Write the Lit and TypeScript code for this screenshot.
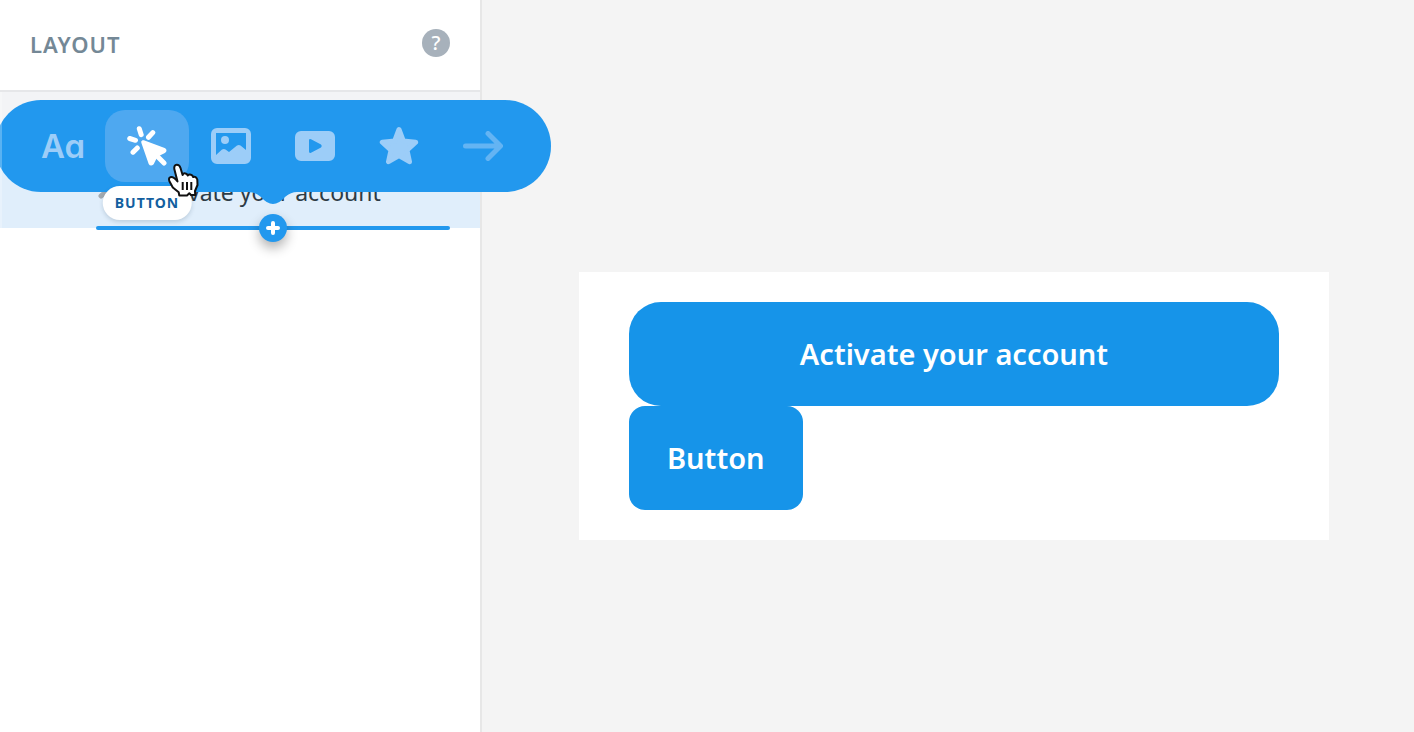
import { LitElement, html, css, svg } from "lit";
import { customElement, property, state } from "lit/decorators.js";

const icons: Record<string, unknown> = {
  button: svg`<svg viewBox="0 0 40 40" width="40" height="40" aria-hidden="true">
    <g fill="none" stroke="currentColor" stroke-width="5" stroke-linecap="round">
      <path d="M12.300 2.700l1.900 6M2.700 12.500l5.800 1.800M25.800 6.600l-4.300 4.700M10.300 21.900l-4.300 4.300M29 29l8 8"/>
    </g>
    <path d="M16.200 16.200L37 23.800Q38 24.500 37 25.200L30.500 28.500 28 31 25 37Q24 38 23.500 37Z" fill="currentColor" stroke="currentColor" stroke-width="4" stroke-linejoin="round"/>
  </svg>`,
  image: svg`<svg viewBox="0 0 40 36" width="40" height="36" aria-hidden="true">
    <path fill="currentColor" fill-rule="evenodd" d="M6 0h28a6 6 0 0 1 6 6v24a6 6 0 0 1-6 6H6a6 6 0 0 1-6-6V6a6 6 0 0 1 6-6zM5 5v22l6-5.500q2-1 3.500 0L18 24l8-6.500q2-1 3.500 0L35 22V5z"/>
    <circle cx="14" cy="12" r="4" fill="currentColor"/>
  </svg>`,
  video: svg`<svg viewBox="0 0 40 30" width="40" height="30" aria-hidden="true">
    <path fill="currentColor" fill-rule="evenodd" d="M6 0h28a6 6 0 0 1 6 6v18a6 6 0 0 1-6 6H6a6 6 0 0 1-6-6V6a6 6 0 0 1 6-6zM14 9.500v11q0 2 2 1.200l10-5.200q1.600-1.500 0-3L16 8.300Q14 7.500 14 9.500z"/>
  </svg>`,
  star: svg`<svg viewBox="0 0 40 40" width="40" height="40" aria-hidden="true">
    <path fill="currentColor" stroke="currentColor" stroke-width="5" stroke-linejoin="round" d="M20 3.500l4.300 11.500L36.700 16.200l-8.700 8 2.500 11.500L20 29.500 9.500 35.700l2.500-11.500L3.300 16.200l12.400-1.200z"/>
  </svg>`,
  arrow: svg`<svg viewBox="0 0 40 30" width="40" height="30" aria-hidden="true">
    <path fill="none" stroke="currentColor" stroke-width="5" stroke-linecap="round" stroke-linejoin="round" d="M2.500 15h34.500M25 2.500L37.500 15 25 27.500"/>
  </svg>`,
};

const blocks = ["text", "button", "image", "video", "star", "arrow"];

@customElement("block-picker")
class BlockPicker extends LitElement {
  @property() selected = "button";

  static styles = css`
    :host {
      display: block;
    }
    .bar {
      display: flex;
      position: relative;
      padding: 10px 26px;
      border-radius: 46px;
      background: #2298ee;
    }
    .tail {
      position: absolute;
      top: 100%;
      left: 50%;
      margin: -1px 0 0 -24px;
      color: #2298ee;
    }
    .item {
      position: relative;
      display: flex;
      align-items: center;
      justify-content: center;
      width: 84px;
      height: 72px;
      padding: 0;
      border: 0;
      border-radius: 20px;
      background: none;
      color: #9ccdf8;
      cursor: pointer;
    }
    .item.selected {
      background: #4ea8f0;
      color: #fff;
    }
    .item.last {
      color: #64b4f3;
    }
    .letters {
      font: 600 33px/40px Inter, sans-serif;
      font-feature-settings: "cv11";
    }
    .tip {
      position: absolute;
      top: 76px;
      left: 50%;
      transform: translateX(-50%);
      padding: 0 12px;
      border-radius: 17px;
      background: #fff;
      box-shadow: 0 2px 4px rgba(30, 60, 90, 0.18);
      color: #135f9f;
      font: 700 14px/34px "Noto Sans", sans-serif;
      letter-spacing: 1px;
    }
    .pointer {
      position: absolute;
      top: 52px;
      left: 62px;
      z-index: 1;
    }
  `;

  private pick(name: string) {
    this.selected = name;
    this.dispatchEvent(new CustomEvent("pick", { detail: name }));
  }

  render() {
    return html`<div class="bar" role="toolbar" aria-label="Blocks">
      ${blocks.map((name) => {
        const on = name === this.selected;
        return html`<button
          class="item ${on ? "selected" : ""} ${name === "arrow" ? "last" : ""}"
          aria-label=${name}
          @click=${() => this.pick(name)}
        >
          ${name === "text" ? html`<span class="letters">Aa</span>` : icons[name]}
          ${on
            ? html`<span class="tip">${name.toUpperCase()}</span>
                <svg class="pointer" width="34" height="36" viewBox="0 0 34 36" aria-hidden="true">
                  <path
                    d="M12.300 33.500L11.700 30.300 5.800 25.500 2.300 19Q1.200 15.500 4 15 7 14.800 10.500 19.500L7.300 7Q6.800 3 9.700 2.800 12.500 2.700 13.500 6L15.600 13Q16.500 10.800 18.500 11.500 20 11.800 20.800 13.500 22 12 24 12.800 25.500 13.300 26.200 15 29 13.800 30.300 17.500L30.500 23 28 29 28.200 33H24L22.300 31.300 20 33.500Z"
                    fill="#fff" stroke="#111" stroke-width="2" stroke-linejoin="round"/>
                  <path d="M15.700 20v8M20 20v8M24.300 20v8" stroke="#111" stroke-width="2"/>
                </svg>`
            : ""}
        </button>`;
      })}
      <svg class="tail" width="48" height="13" viewBox="0 0 48 13" aria-hidden="true">
        <path fill="currentColor" d="M0 0h48v1q-6 0-12 5-6 7-12 7T12 6Q6 1 0 1z"/>
      </svg>
    </div>`;
  }
}

@customElement("app-root")
class AppRoot extends LitElement {
  @state() private picked = "button";

  static styles = css`
    :host {
      display: grid;
      grid-template-columns: 480px 1fr;
      min-height: 100vh;
      overflow: hidden;
      position: relative;
      background: #f4f4f4;
      font-family: "Noto Sans", sans-serif;
    }
    .side {
      background: #fff;
      box-shadow: 2px 0 #e7e7e7;
    }
    .head {
      display: flex;
      align-items: center;
      justify-content: space-between;
      height: 90px;
      padding: 0 30px;
      border-bottom: 2px solid #e6e7e9;
    }
    .title {
      margin: 0;
      padding-bottom: 2px;
      color: #748896;
      font-size: 22px;
      line-height: 32px;
      font-weight: 600;
      letter-spacing: 1px;
    }
    .help {
      width: 28px;
      height: 28px;
      margin-bottom: 4px;
      padding: 0;
      border: 0;
      border-radius: 50%;
      background: #a7b1bb;
      color: #fff;
      font: 500 20px/28px "Noto Sans", sans-serif;
    }
    .group {
      height: 64px;
      background: #f3f4f6;
    }
    .row {
      position: relative;
      display: flex;
      align-items: center;
      gap: 20px;
      height: 72px;
      padding: 0 30px 0 96px;
      background: #e0eefb;
      color: #2d3b45;
      font-size: 23px;
      line-height: 32px;
    }
    .chain {
      color: #a2a9b0;
    }
    .drop {
      position: absolute;
      left: 96px;
      right: 30px;
      bottom: -2px;
      height: 4px;
      border-radius: 2px;
      background: #2298ee;
    }
    .add {
      position: absolute;
      top: -12px;
      left: 50%;
      width: 28px;
      height: 28px;
      margin-left: -14px;
      padding: 0;
      border: 0;
      border-radius: 50%;
      background: #2298ee;
      box-shadow: 0 6px 12px rgba(0, 0, 0, 0.3);
    }
    .plus {
      display: block;
    }
    .picker {
      position: absolute;
      top: 100px;
      left: -5px;
    }
    .edge {
      position: absolute;
      top: 92px;
      left: 0;
      width: 2px;
      height: 136px;
      background: rgba(255, 255, 255, 0.25);
    }
    .stage {
      display: flex;
      align-items: center;
      justify-content: center;
      padding: 80px 84px 0 98px;
    }
    .card {
      display: flex;
      flex-direction: column;
      align-items: flex-start;
      flex: 1;
      max-width: 650px;
      padding: 30px 50px;
      background: #fff;
    }
    .cta {
      padding: 32px 38px;
      border: 0;
      border-radius: 16px;
      background: #1694e9;
      color: #fff;
      font: 600 29px/40px "Noto Sans", sans-serif;
    }
    .wide {
      align-self: stretch;
      border-radius: 32px;
    }
  `;

  render() {
    return html`
      <aside class="side">
        <header class="head">
          <h1 class="title">LAYOUT</h1>
          <button class="help" aria-label="Help">?</button>
        </header>
        <div class="group"></div>
        <div class="row">
          <svg class="chain" width="32" height="32" viewBox="0 0 32 32" aria-hidden="true">
            <path d="M5 20l22-18" stroke="currentColor" stroke-width="5" stroke-linecap="round"/>
          </svg>
          <span>Activate your account</span>
          <div class="drop">
            <button class="add" aria-label="Add block">
              <svg class="plus" width="28" height="28" viewBox="0 0 28 28" aria-hidden="true">
                <path d="M14 9v10M9 14h10" stroke="#fff" stroke-width="4" stroke-linecap="round"/>
              </svg>
            </button>
          </div>
        </div>
      </aside>
      <main class="stage">
        <section class="card">
          <button class="cta wide">Activate your account</button>
          ${this.picked === "button" ? html`<button class="cta">Button</button>` : ""}
        </section>
      </main>
      <block-picker class="picker" .selected=${this.picked}
        @pick=${(e: CustomEvent) => (this.picked = e.detail)}></block-picker>
      <div class="edge"></div>
    `;
  }
}
